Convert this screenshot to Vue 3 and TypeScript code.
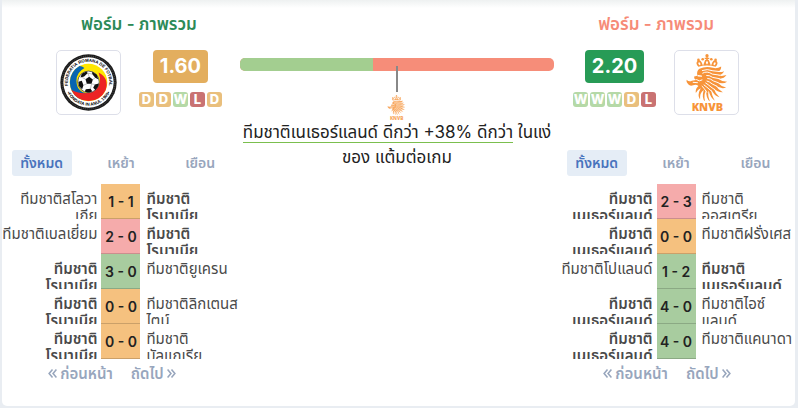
<script setup lang="ts">
type Result = 'W' | 'D' | 'L'
interface Match {
  home: string
  away: string
  score: string
  result: Result
}
interface Side {
  key: 'romania' | 'netherlands'
  team: string
  rating: string
  form: Result[]
  matches: Match[]
}

const RO = 'ทีมชาติโรมาเนีย'
const NL = 'ทีมชาติเนเธอร์แลนด์'

const sides: Side[] = [
  {
    key: 'romania',
    team: RO,
    rating: '1.60',
    form: ['D', 'D', 'W', 'L', 'D'],
    matches: [
      { home: 'ทีมชาติสโลวาเกีย', away: RO, score: '1 - 1', result: 'D' },
      { home: 'ทีมชาติเบลเยี่ยม', away: RO, score: '2 - 0', result: 'L' },
      { home: RO, away: 'ทีมชาติยูเครน', score: '3 - 0', result: 'W' },
      { home: RO, away: 'ทีมชาติลิกเตนสไตน์', score: '0 - 0', result: 'D' },
      { home: RO, away: 'ทีมชาติบัลแกเรีย', score: '0 - 0', result: 'D' },
    ],
  },
  {
    key: 'netherlands',
    team: NL,
    rating: '2.20',
    form: ['W', 'W', 'W', 'D', 'L'],
    matches: [
      { home: NL, away: 'ทีมชาติออสเตรีย', score: '2 - 3', result: 'L' },
      { home: NL, away: 'ทีมชาติฝรั่งเศส', score: '0 - 0', result: 'D' },
      { home: 'ทีมชาติโปแลนด์', away: NL, score: '1 - 2', result: 'W' },
      { home: NL, away: 'ทีมชาติไอซ์แลนด์', score: '4 - 0', result: 'W' },
      { home: NL, away: 'ทีมชาติแคนาดา', score: '4 - 0', result: 'W' },
    ],
  },
]

const tabs = ['ทั้งหมด', 'เหย้า', 'เยือน']
const share = 42.3
</script>

<template>
  <svg class="defs" aria-hidden="true">
    <symbol id="lion" viewBox="0 0 132 176">
      <g fill="#f7943a">
        <circle cx="66" cy="5" r="5" />
        <path d="M64 8h4v10h-4zM59 11h14v4h-14z" />
        <path d="M40 39Q30 28 37 21Q45 16 50 26L54 36L58 24Q59 16 66 16Q73 16 74 24L78 36L82 26Q87 16 95 21Q102 28 92 39Q66 31 40 39ZM41 25Q37 30 43 34L46 33Q47 24 41 25ZM66 21Q60 25 66 32Q72 25 66 21ZM91 25Q85 24 86 33L89 34Q95 30 91 25Z" fill-rule="evenodd" />
        <circle cx="40" cy="18" r="4" /><circle cx="53" cy="16" r="4" /><circle cx="79" cy="16" r="4" /><circle cx="92" cy="18" r="4" />
        <path d="M37 66Q33 52 43 45Q62 36 84 42Q97 45 109 38Q110 50 98 54Q109 56 118 52Q112 64 98 64Q110 69 125 64Q116 78 98 74Q112 84 127 84Q114 93 96 85Q108 98 124 102Q108 108 92 95Q99 108 114 116Q99 117 86 103Q90 118 104 131Q88 128 79 108Q79 124 90 142Q76 133 71 111Q67 125 75 144Q62 134 64 110Q55 123 60 143Q49 135 56 109Q43 118 45 138Q35 126 47 104Q38 108 32 118Q30 105 40 97Q33 91 24 95Q15 99 9 92Q2 87 4 78Q12 86 20 81L33 79Q25 74 27 68Z" />
      </g>
      <g fill="none" stroke="#fff" stroke-width="3" stroke-linecap="round">
        <path d="M52 50Q66 44 84 51L102 53M53 58Q66 50 82 61L104 64M65 65Q74 64 83 71L104 75M68 74Q76 74 86 82L100 87M66 82Q74 84 82 91L96 98M62 88Q70 93 78 100L89 108M57 94L66 101L80 113M51 98L57 104L65 116M34 78Q43 85 51 79M24 86L37 87" />
        <path d="M39 66L49 67" stroke-width="4" />
      </g>
      <text class="knvb" x="67" y="173" text-anchor="middle" fill="#f7943a">KNVB</text>
    </symbol>
    <symbol id="frf" viewBox="0 0 170 170">
      <circle cx="85" cy="85" r="84" fill="#1c1c1c" />
      <circle cx="85" cy="85" r="79" fill="none" stroke="#777" stroke-width="2" stroke-dasharray="2 4" />
      <circle cx="85" cy="85" r="75" fill="#fff" />
      <circle cx="85" cy="85" r="56" fill="#ffe600" />
      <path d="M58 36A56 56 0 0 0 54 131Q82 145 100 119Q50 122 49 80Q49 55 73 42Q66 36 58 36Z" fill="#0865b1" />
      <path d="M34 107A56 56 0 0 0 136 108Q148 72 115 55Q127 87 107 106Q78 127 34 107Z" fill="#ed2424" />
      <circle cx="85" cy="83" r="32" fill="#fff" stroke="#222" stroke-width="2" />
      <path d="M76 75L87 68L98 76L94 89L80 89ZM65 59L78 52L83 57L72 67L61 70ZM96 53L110 62L114 75L105 71L96 60ZM55 83L65 80L70 93L66 105L57 96ZM104 91L116 88Q114 101 106 108L99 101ZM77 105L91 104L96 111Q86 118 74 112Z" fill="#111" />
      <path d="M87 68L83 57L96 60M98 76L105 71M94 89L104 91M80 89L70 93M76 75L66 70M91 104L94 89" fill="none" stroke="#444" stroke-width="1" />
      <path id="arc-top" d="M25 101A62 62 0 1 1 145 101" fill="none" />
      <path id="arc-base" d="M15 95A71 71 0 0 0 155 95" fill="none" />
      <text class="ring"><textPath href="#arc-top" startOffset="50%" text-anchor="middle">FEDERATIA ROMANA DE FOTBAL</textPath></text>
      <text class="ring"><textPath href="#arc-base" startOffset="50%" text-anchor="middle">•FONDATA IN ANUL 1909•</textPath></text>
    </symbol>
  </svg>

  <main class="card">
    <section v-for="side in sides" :key="side.key" class="side" :class="side.key">
      <header class="summary">
        <h2 class="title">ฟอร์ม - ภาพรวม</h2>
        <div class="overview">
          <a class="crest" href="#" :aria-label="side.team">
            <svg v-if="side.key === 'romania'" class="frf"><use href="#frf" /></svg>
            <svg v-else class="lion"><use href="#lion" /></svg>
          </a>
          <div class="form">
            <strong class="rating">{{ side.rating }}</strong>
            <div class="badges">
              <span v-for="(r, i) in side.form" :key="i" class="badge" :class="r">{{ r }}</span>
            </div>
          </div>
        </div>
      </header>

      <nav class="tabs">
        <button v-for="(tab, i) in tabs" :key="tab" type="button" class="tab" :class="{ active: i === 0 }">{{ tab }}</button>
      </nav>

      <table class="matches">
        <colgroup>
          <col />
          <col class="score-col" />
          <col />
        </colgroup>
        <tbody>
          <tr v-for="(m, i) in side.matches" :key="i">
            <td class="team home" :class="{ own: m.home === side.team }"><div class="name">{{ m.home }}</div></td>
            <td class="score" :class="m.result">{{ m.score }}</td>
            <td class="team" :class="{ own: m.away === side.team }"><div class="name">{{ m.away }}</div></td>
          </tr>
        </tbody>
      </table>

      <nav class="pager">
        <a href="#">
          <svg class="chevron" viewBox="0 0 8 8"><path d="M4 0.5L1 4L4 7.5M7.5 0.5L4.5 4L7.5 7.5" /></svg>
          ก่อนหน้า
        </a>
        <a href="#">
          ถัดไป
          <svg class="chevron" viewBox="0 0 8 8"><path d="M0.5 0.5L3.5 4L0.5 7.5M4 0.5L7 4L4 7.5" /></svg>
        </a>
      </nav>
    </section>

    <section class="compare">
      <div class="bar"><div class="fill" :style="{ width: share + '%' }"></div></div>
      <div class="stem"></div>
      <svg class="mini"><use href="#lion" /></svg>
      <p class="verdict"><span class="lead">ทีมชาติเนเธอร์แลนด์ ดีกว่า +38% ดีกว่า</span> ในแง่ของ แต้มต่อเกม</p>
    </section>
  </main>
</template>

<style>
body {
  background: #e9edf2;
}
</style>

<style scoped>
.defs {
  position: absolute;
  width: 0;
  height: 0;
}
.card {
  display: grid;
  grid-template-columns: 3fr 4fr 3fr;
  margin: 0 3px 3px 2px;
  padding-bottom: 19px;
  border-radius: 0 0 5px 5px;
  background: linear-gradient(#eef1f1, #fff 8px);
  color: #222;
  font-family: Inter, "Noto Sans Thai", Tahoma, "Liberation Sans", sans-serif;
  font-size: 14px;
}
.side {
  grid-row: 1;
  grid-column: 1;
  min-width: 0;
}
.side.netherlands {
  grid-column: 3;
}
.summary {
  display: flex;
  flex-direction: column;
  align-items: center;
  height: 150px;
}
.romania .summary {
  margin-right: -36px;
}
.netherlands .summary {
  margin-left: -40px;
}
.title {
  margin: 10px 0 12px;
  color: #2c8a57;
  font-size: 17px;
  line-height: 28px;
  font-weight: 600;
}
.netherlands .title {
  color: #f68b78;
}
.overview {
  display: flex;
  gap: 18px;
}
.netherlands .overview {
  flex-direction: row-reverse;
}
.crest {
  display: flex;
  align-items: center;
  justify-content: center;
  box-sizing: border-box;
  width: 65px;
  height: 65px;
  border: 1px solid #dddfe9;
  border-radius: 5px;
  background: #fff;
}
.frf {
  width: 57px;
  height: 57px;
}
.lion {
  width: 44px;
  height: 58px;
}
.knvb {
  font: 900 33px "Open Sans", sans-serif;
}
.ring {
  font: 700 13px "Liberation Sans", sans-serif;
}
.form {
  display: flex;
  flex-direction: column;
  align-items: center;
  gap: 9px;
}
.rating {
  padding: 0 7px;
  border-radius: 4px;
  background: #e3ae5e;
  color: #fff;
  font-size: 20px;
  line-height: 33px;
}
.netherlands .rating {
  background: #279b56;
}
.badges {
  display: flex;
  gap: 2px;
}
.badge {
  width: 15px;
  border-radius: 3px;
  color: #fff;
  font-size: 13px;
  line-height: 15px;
  font-weight: 800;
  text-align: center;
}
.badge.W {
  background: #b5d9a7;
}
.badge.D {
  background: #e9bf7d;
}
.badge.L {
  background: #c97272;
}
.tabs {
  display: grid;
  grid-template-columns: repeat(3, 1fr);
  justify-items: center;
  margin-bottom: 8px;
}
.tab {
  width: 60px;
  height: 26px;
  padding: 0;
  border: 0;
  border-radius: 3px;
  background: none;
  color: #98a6bd;
  font: inherit;
  font-weight: 600;
}
.tab.active {
  background: #e5edf6;
  color: #4a74bd;
}
.matches {
  width: 100%;
  table-layout: fixed;
  border-collapse: collapse;
}
.score-col {
  width: 39px;
}
.matches td {
  height: 35px;
  padding: 0;
}
.team {
  vertical-align: top;
  color: #4a4a4a;
  font-size: 15px;
}
.name {
  box-sizing: border-box;
  height: 35px;
  padding: 6px 0 0 6px;
  overflow: hidden;
  line-height: 17px;
}
.home .name {
  padding: 6px 4px 0 0;
  text-align: right;
}
.own {
  font-weight: 600;
}
.score {
  box-shadow: inset 0 -1px rgba(0, 0, 0, 0.17);
  font-weight: 600;
  text-align: center;
}
.score.W {
  background: #a8cc9f;
}
.score.D {
  background: #f5c17f;
}
.score.L {
  background: #f5abab;
}
.pager {
  display: flex;
  justify-content: center;
  gap: 18px;
  margin: 1px 18px 0 0;
  font-size: 15px;
  line-height: 27px;
}
.pager a {
  display: flex;
  align-items: center;
  gap: 3px;
  color: #98a6bd;
  font-weight: 600;
  text-decoration: none;
}
.chevron {
  width: 9px;
  height: 9px;
  fill: none;
  stroke: currentColor;
  stroke-width: 1.4;
}
.compare {
  grid-row: 1;
  grid-column: 2;
  display: flex;
  flex-direction: column;
  align-items: center;
  padding: 58px 3px 0 0;
}
.bar {
  align-self: stretch;
  height: 13px;
  border-radius: 5px;
  overflow: hidden;
  background: #f68d79;
}
.fill {
  height: 100%;
  background: #a3ce90;
}
.stem {
  z-index: 1;
  width: 2px;
  height: 26px;
  margin: -5px 0 3px;
  background: #888;
}
.mini {
  width: 19px;
  height: 25px;
  opacity: 0.8;
}
.verdict {
  margin: 0;
  font-size: 17px;
  line-height: 25px;
  text-align: center;
}
.lead {
  border-bottom: 1px solid #7bbf4e;
}
</style>
